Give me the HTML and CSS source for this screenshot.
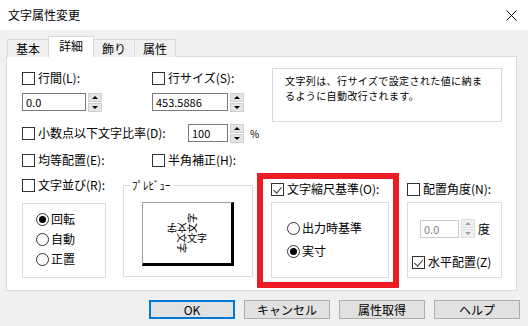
FILE: index.html
```html
<!DOCTYPE html>
<html lang="ja">
<head>
    <meta charset="UTF-8">
    <title>文字属性変更</title>
    <link rel="stylesheet" href="styles.css">
</head>
<body>
    <div id="titlebar">
        <span class="title">文字属性変更</span>
        <svg class="close" width="11" height="11" viewBox="0 0 11 11">
            <path d="M0.5 0.5L10.5 10.5M10.5 0.5L0.5 10.5" stroke="#000" stroke-width="1" fill="none"/>
        </svg>
    </div>

    <div class="tabs">
        <div class="tab">基本</div>
        <div class="tab active">詳細</div>
        <div class="tab">飾り</div>
        <div class="tab">属性</div>
    </div>

    <div id="panel">
        <div class="top-grid">
            <label class="check"><span class="box"></span>行間(L):</label>
            <label class="check"><span class="box"></span>行サイズ(S):</label>
            <div class="note">
                <div>文字列は、行サイズで設定された値に納ま</div>
                <div>るように自動改行されます。</div>
            </div>

            <div class="spin-field">
                <div class="input w-line">0.0</div>
                <div class="spin"><span class="sb up"></span><span class="sb down"></span></div>
            </div>
            <div class="spin-field">
                <div class="input w-size">453.5886</div>
                <div class="spin"><span class="sb up"></span><span class="sb down"></span></div>
            </div>
        </div>

        <div class="ratio-row">
            <label class="check ratio-label"><span class="box"></span>小数点以下文字比率(D):</label>
            <div class="spin-field">
                <div class="input w-ratio">100</div>
                <div class="spin"><span class="sb up"></span><span class="sb down"></span></div>
            </div>
            <span class="percent">%</span>
        </div>

        <div class="even-row">
            <label class="check"><span class="box"></span>均等配置(E):</label>
            <label class="check"><span class="box"></span>半角補正(H):</label>
        </div>

        <div class="lower">
            <div class="col-order">
                <div class="cb-row">
                    <label class="check"><span class="box"></span>文字並び(R):</label>
                </div>
                <div class="group order-group">
                    <label class="radio"><span class="circle checked"></span>回転</label>
                    <label class="radio"><span class="circle"></span>自動</label>
                    <label class="radio"><span class="circle"></span>正置</label>
                </div>
            </div>

            <div class="col-preview">
                <div class="preview-group">
                    <span class="legend">ﾌﾟﾚﾋﾞｭｰ</span>
                    <div class="preview-box">
                        <span class="arm">文字</span>
                        <span class="arm r-up">文字</span>
                        <span class="arm r-left">文字</span>
                        <span class="arm r-down">文字</span>
                    </div>
                </div>
            </div>

            <div class="col-scale">
                <div class="cb-row">
                    <label class="check"><span class="box checked"></span>文字縮尺基準(O):</label>
                </div>
                <div class="group scale-group">
                    <label class="radio"><span class="circle"></span>出力時基準</label>
                    <label class="radio"><span class="circle checked"></span>実寸</label>
                </div>
            </div>

            <div class="col-angle">
                <div class="cb-row">
                    <label class="check"><span class="box"></span>配置角度(N):</label>
                </div>
                <div class="group angle-group">
                    <div class="angle-row">
                        <div class="spin-field">
                            <div class="input w-angle disabled">0.0</div>
                            <div class="spin disabled"><span class="sb up"></span><span class="sb down"></span></div>
                        </div>
                        <span class="deg">度</span>
                    </div>
                    <div class="cb-row horiz-row">
                        <label class="check"><span class="box checked"></span>水平配置(Z)</label>
                    </div>
                </div>
            </div>
        </div>
    </div>

    <div class="actions">
        <button class="default">OK</button>
        <button>キャンセル</button>
        <button>属性取得</button>
        <button>ヘルプ</button>
    </div>
</body>
</html>
```

FILE: styles.css
```css
* {
    box-sizing: border-box;
}

body {
    margin: 0;
    width: 528px;
    height: 326px;
    overflow: hidden;
    background-color: #f0f0f0;
    font-family: "Noto Sans CJK JP", sans-serif;
    font-size: 12px;
    color: #000;
}

#titlebar {
    height: 30px;
    background-color: #fff;
    display: flex;
    align-items: center;
    justify-content: space-between;
    padding: 0 11px 0 8px;
}

.title {
    line-height: 14px;
}

/* tabs */
.tabs {
    position: relative;
    z-index: 1;
    display: flex;
    align-items: flex-end;
    height: 21px;
    margin: 6px 0 -1px 7px;
}

.tab {
    height: 18px;
    padding: 0 8px;
    border: 1px solid #d9d9d9;
    border-bottom: none;
    background-color: #f0f0f0;
    line-height: 17px;
    margin-right: -1px;
}

.tab.active {
    height: 21px;
    padding: 0 10px;
    background-color: #fff;
    line-height: 17px;
}

#panel {
    height: 235px;
    margin: 0 11px 0 6px;
    background-color: #fff;
    border: 1px solid #d9d9d9;
    padding: 10px 0 0 15px;
}

/* controls */
.check, .radio {
    display: flex;
    align-items: center;
    white-space: nowrap;
    line-height: 14px;
}

.box {
    width: 13px;
    height: 13px;
    border: 1px solid #333;
    background-color: #fff;
    margin-right: 3px;
    flex-shrink: 0;
    position: relative;
}

.box.checked::after {
    content: "";
    position: absolute;
    left: 3px;
    top: 1px;
    width: 4px;
    height: 7px;
    border-right: 1.5px solid #333;
    border-bottom: 1.5px solid #333;
    transform: rotate(40deg);
}

.circle {
    width: 13px;
    height: 13px;
    border: 1px solid #333;
    border-radius: 50%;
    background-color: #fff;
    margin-right: 2px;
    flex-shrink: 0;
    display: flex;
    align-items: center;
    justify-content: center;
}

.circle.checked::after {
    content: "";
    width: 7px;
    height: 7px;
    border-radius: 50%;
    background-color: #000;
}

.spin-field {
    display: flex;
    align-items: center;
    gap: 2px;
}

.input {
    height: 18px;
    border: 1px solid #7a7a7a;
    background-color: #fff;
    padding-left: 3px;
    font-size: 11px;
    line-height: 16px;
}

.input.disabled {
    border-color: #cccccc;
    color: #838383;
}

.w-line { width: 64px; }
.w-size { width: 76px; }
.w-ratio { width: 40px; }
.w-angle { width: 39px; }

.spin {
    display: flex;
    flex-direction: column;
    gap: 1px;
    width: 14px;
}

.sb {
    height: 9px;
    background-color: #e5e5e5;
    border: 1px solid #cfcfcf;
    display: flex;
    align-items: center;
    justify-content: center;
}

.sb.up::after {
    content: "";
    border-left: 3px solid transparent;
    border-right: 3px solid transparent;
    border-bottom: 3px solid #000;
}

.sb.down::after {
    content: "";
    border-left: 3px solid transparent;
    border-right: 3px solid transparent;
    border-top: 3px solid #000;
}

.spin.disabled .sb {
    background-color: #f0f0f0;
    border-color: #dedede;
}

.spin.disabled .sb.up::after { border-bottom-color: #a0a0a0; }
.spin.disabled .sb.down::after { border-top-color: #a0a0a0; }

/* top part */
.top-grid {
    display: grid;
    grid-template-columns: 130px 120px 230px;
    grid-template-rows: 22px 22px;
    row-gap: 2px;
    align-items: center;
}

.note {
    grid-column: 3;
    grid-row: 1 / 3;
    align-self: start;
    margin-top: 1px;
    height: 54px;
    border: 1px solid #d9d9d9;
    padding: 5px 0 0 12px;
    font-size: 10px;
    line-height: 14.5px;
    letter-spacing: 0.4px;
    white-space: nowrap;
}

.ratio-row {
    display: flex;
    align-items: center;
    height: 22px;
    margin-top: 9px;
}

.ratio-label {
    width: 166px;
}

.percent {
    margin-left: 6px;
    font-size: 10px;
}

.even-row {
    display: grid;
    grid-template-columns: 130px 120px;
    align-items: center;
    height: 22px;
    margin-top: 5px;
}

/* lower part */
.lower {
    display: flex;
    align-items: flex-start;
    margin-top: 2px;
}

.cb-row {
    display: flex;
    align-items: center;
    height: 20px;
}

.group {
    border: 1px solid #dcdcdc;
}

.col-order {
    width: 84px;
    padding-top: 1px;
}

.col-order .cb-row {
    height: 22px;
}

.order-group {
    margin-top: 7px;
    height: 75px;
    padding: 5px 0 0 13px;
}

.order-group .radio {
    height: 20px;
}

.col-preview {
    width: 130px;
    margin: 12px 0 0 17px;
}

.preview-group {
    position: relative;
    height: 92px;
    border: 1px solid #dcdcdc;
    padding: 16px 0 0 18px;
}

.legend {
    position: absolute;
    top: -8px;
    left: 6px;
    padding: 0 2px;
    background-color: #fff;
    line-height: 14px;
    font-size: 11px;
}

.preview-box {
    position: relative;
    width: 92px;
    height: 64px;
    border-left: 1px solid #a0a0a0;
    border-top: 1px solid #a0a0a0;
    border-right: 3px solid #000;
    border-bottom: 3px solid #000;
}

.arm {
    position: absolute;
    left: 44px;
    top: 30px;
    font-size: 10px;
    line-height: 10px;
    white-space: nowrap;
    transform-origin: 0 0;
}

.r-up { transform: rotate(-90deg); }
.r-left { transform: rotate(180deg); }
.r-down { transform: rotate(90deg); }

.col-scale {
    width: 142px;
    height: 115px;
    margin-left: 4px;
    border: 6px solid #ed1c24;
    padding-left: 8px;
}

.scale-group {
    width: 118px;
    height: 76px;
    margin-top: 3px;
    padding: 15px 0 0 15px;
    display: flex;
    flex-direction: column;
    gap: 3px;
}

.scale-group .radio {
    height: 20px;
}

.col-angle {
    width: 95px;
    margin-left: 8px;
    padding-top: 6px;
}

.angle-group {
    height: 76px;
    margin-top: 3px;
    padding: 16px 0 0 4px;
}

.angle-row {
    display: flex;
    align-items: center;
    margin-left: 8px;
}

.deg {
    margin-left: 3px;
}

.horiz-row {
    margin-top: 14px;
}

/* buttons */
.actions {
    display: flex;
    justify-content: flex-end;
    gap: 9px;
    margin-top: 9px;
    padding-right: 8px;
}

.actions button {
    width: 86px;
    height: 19px;
    padding: 0;
    background-color: #e1e1e1;
    border: 1px solid #adadad;
    font-family: "Noto Sans CJK JP", sans-serif;
    font-size: 12px;
    line-height: 14px;
    color: #000;
}

.actions button.default {
    border: 2px solid #0078d7;
}
```
